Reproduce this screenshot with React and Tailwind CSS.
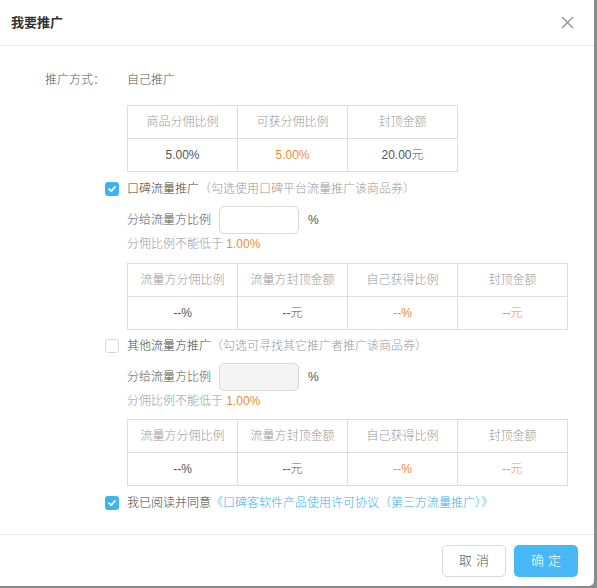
import React from 'react'

const font = { fontFamily: '"Liberation Sans", "Noto Sans CJK SC", sans-serif' }

function Check({ on }) {
  if (!on) {
    return <span className="w-[14px] h-[14px] rounded-[3px] border border-[#d9d9d9] bg-white shrink-0" />
  }
  return (
    <span className="w-[14px] h-[14px] rounded-[3px] bg-[#3db3f2] shrink-0 flex items-center justify-center">
      <svg width="10" height="10" viewBox="0 0 10 10" fill="none">
        <path d="M2 5.2 L4.2 7.2 L8 3" stroke="white" strokeWidth="1.8" strokeLinecap="round" strokeLinejoin="round" />
      </svg>
    </span>
  )
}

function Table({ cols }) {
  return (
    <div className="flex border-t border-l border-[#dddddd] w-fit">
      {cols.map(([head, val, orange]) => (
        <div key={head} className="w-[110px] flex flex-col border-r border-[#dddddd]">
          <div className="h-[33px] flex items-center justify-center border-b border-[#dddddd] text-[#999]">{head}</div>
          <div className={`h-[33px] flex items-center justify-center border-b border-[#dddddd] ${orange ? 'text-[#f5892f]' : 'text-[#555]'}`}>{val}</div>
        </div>
      ))}
    </div>
  )
}

function RatioInput({ disabled }) {
  return (
    <div className="flex items-center text-[#555]">
      <span className="w-[92px]">分给流量方比例</span>
      <div className={`w-[80px] h-[28px] rounded-[5px] border border-[#d9d9d9] ${disabled ? 'bg-[#f4f4f4]' : 'bg-white'}`} />
      <span className="ml-[9px]">%</span>
    </div>
  )
}

export default function App() {
  const flowCols = [
    ['流量方分佣比例', '--%'],
    ['流量方封顶金额', '--元'],
    ['自己获得比例', '--%', true],
    ['封顶金额', '--元', true],
  ]
  return (
    <div className="w-[597px] h-[588px] bg-[#8a8a8a] text-[12px] font-light" style={font}>
      <div className="w-[594px] h-[586px] bg-white rounded-br-[5px] flex flex-col">
        <div className="h-[46px] border-b border-[#e9e9e9] flex items-center justify-between pl-[11px] pr-[20px]">
          <span className="text-[13px] font-bold text-[#333]">我要推广</span>
          <svg width="13" height="13" viewBox="0 0 13 13" stroke="#999" strokeWidth="1.5">
            <path d="M1 1 L12 12 M12 1 L1 12" />
          </svg>
        </div>

        <div className="flex-1 pl-[45px] pt-[26px]">
          <div className="flex items-center h-[16px] text-[#555]">
            <span className="w-[82px]">推广方式：</span>
            <span>自己推广</span>
          </div>

          <div className="ml-[82px] mt-[17px]">
            <Table cols={[['商品分佣比例', '5.00%'], ['可获分佣比例', '5.00%', true], ['封顶金额', '20.00元']]} />
          </div>

          <div className="flex items-center mt-[9px] ml-[60px] h-[16px]">
            <Check on />
            <span className="ml-[8px] text-[#444]">口碑流量推广</span>
            <span className="text-[#999]">（勾选使用口碑平台流量推广该商品券）</span>
          </div>

          <div className="ml-[82px] mt-[9px]">
            <RatioInput />
            <div className="mt-[1px] text-[#999]">分佣比例不能低于 <span className="text-[#f5892f]">1.00%</span></div>
            <div className="mt-[10px]">
              <Table cols={flowCols} />
            </div>
          </div>

          <div className="flex items-center mt-[8px] ml-[60px] h-[16px]">
            <Check />
            <span className="ml-[8px] text-[#444]">其他流量方推广</span>
            <span className="text-[#999]">（勾选可寻找其它推广者推广该商品券）</span>
          </div>

          <div className="ml-[82px] mt-[9px]">
            <RatioInput disabled />
            <div className="mt-[1px] text-[#999]">分佣比例不能低于 <span className="text-[#f5892f]">1.00%</span></div>
            <div className="mt-[9px]">
              <Table cols={flowCols} />
            </div>
          </div>

          <div className="flex items-center mt-[9px] ml-[60px] h-[16px]">
            <Check on />
            <span className="ml-[8px] text-[#444]">我已阅读并同意</span>
            <span className="text-[#3aaef0]">《口碑客软件产品使用许可协议（第三方流量推广）》</span>
          </div>
        </div>

        <div className="h-[52px] border-t border-[#e9e9e9] flex items-center justify-end gap-[8px] pr-[16px]">
          <button className="w-[64px] h-[32px] rounded-[5px] border border-[#d9d9d9] bg-white text-[13px] text-[#555] tracking-[4px] pl-[4px]">取消</button>
          <button className="w-[64px] h-[32px] rounded-[5px] bg-[#46b8f5] text-[13px] text-white tracking-[4px] pl-[4px]">确定</button>
        </div>
      </div>
    </div>
  )
}
